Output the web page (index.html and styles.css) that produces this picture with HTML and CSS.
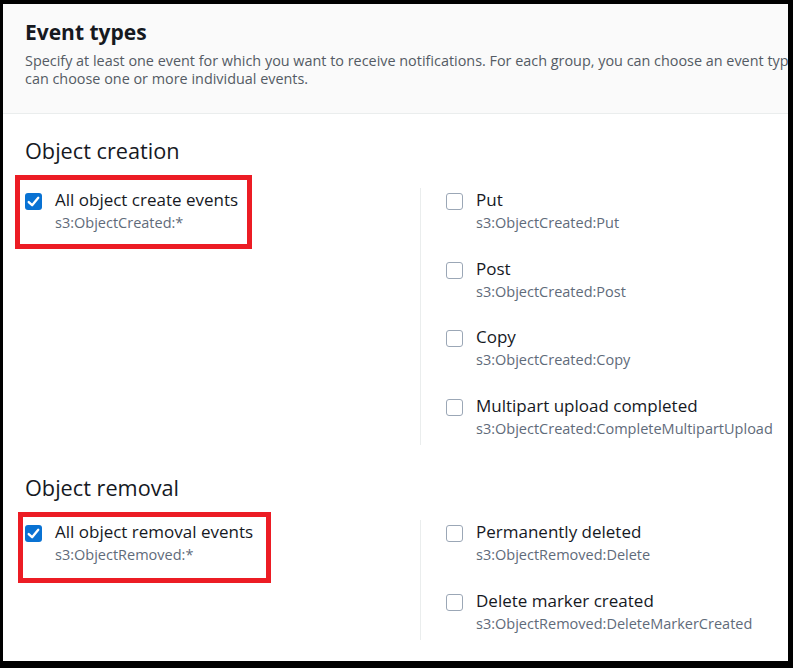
FILE: index.html
```html
<!DOCTYPE html>
<html lang="en">
<head>
    <meta charset="UTF-8">
    <meta name="viewport" content="width=device-width, initial-scale=1.0">
    <title>Event types</title>
    <link rel="stylesheet" href="styles.css">
</head>
<body>
    <div class="frame">
        <div class="panel-header">
            <h2>Event types</h2>
            <p class="panel-desc">Specify at least one event for which you want to receive notifications. For each group, you can choose an event type for all events, or you<br>can choose one or more individual events.</p>
        </div>

        <div class="panel-body">
            <div class="group">
                <h3 class="group-title">Object creation</h3>
                <div class="group-grid">
                    <div class="col-all">
                        <label class="item">
                            <span class="box checked">
                                <svg viewBox="0 0 16 16"><polyline points="3.5,8.5 6.7,11.5 12.5,4.5"/></svg>
                            </span>
                            <span class="item-text">
                                <span class="item-label">All object create events</span>
                                <span class="item-desc">s3:ObjectCreated:*</span>
                            </span>
                            <span class="annot annot-create"></span>
                        </label>
                    </div>
                    <div class="col-list">
                        <label class="item">
                            <span class="box"></span>
                            <span class="item-text">
                                <span class="item-label">Put</span>
                                <span class="item-desc">s3:ObjectCreated:Put</span>
                            </span>
                        </label>
                        <label class="item">
                            <span class="box"></span>
                            <span class="item-text">
                                <span class="item-label">Post</span>
                                <span class="item-desc">s3:ObjectCreated:Post</span>
                            </span>
                        </label>
                        <label class="item">
                            <span class="box"></span>
                            <span class="item-text">
                                <span class="item-label">Copy</span>
                                <span class="item-desc">s3:ObjectCreated:Copy</span>
                            </span>
                        </label>
                        <label class="item">
                            <span class="box"></span>
                            <span class="item-text">
                                <span class="item-label">Multipart upload completed</span>
                                <span class="item-desc">s3:ObjectCreated:CompleteMultipartUpload</span>
                            </span>
                        </label>
                    </div>
                </div>
            </div>

            <div class="group group-second">
                <h3 class="group-title">Object removal</h3>
                <div class="group-grid">
                    <div class="col-all">
                        <label class="item">
                            <span class="box checked">
                                <svg viewBox="0 0 16 16"><polyline points="3.5,8.5 6.7,11.5 12.5,4.5"/></svg>
                            </span>
                            <span class="item-text">
                                <span class="item-label">All object removal events</span>
                                <span class="item-desc">s3:ObjectRemoved:*</span>
                            </span>
                            <span class="annot annot-removal"></span>
                        </label>
                    </div>
                    <div class="col-list">
                        <label class="item">
                            <span class="box"></span>
                            <span class="item-text">
                                <span class="item-label">Permanently deleted</span>
                                <span class="item-desc">s3:ObjectRemoved:Delete</span>
                            </span>
                        </label>
                        <label class="item">
                            <span class="box"></span>
                            <span class="item-text">
                                <span class="item-label">Delete marker created</span>
                                <span class="item-desc">s3:ObjectRemoved:DeleteMarkerCreated</span>
                            </span>
                        </label>
                    </div>
                </div>
            </div>
        </div>
    </div>
</body>
</html>
```

FILE: styles.css
```css
body {
    margin: 0;
    font-family: "Open Sans", "Noto Sans", sans-serif;
    color: #16191f;
    background: #fff;
}
.frame {
    height: 668px;
    box-sizing: border-box;
    border-style: solid;
    border-color: #000;
    border-width: 4px 5px 7px 3px;
    overflow: hidden;
    background: #fff;
}

/* header */
.panel-header {
    background: #fafafa;
    border-bottom: 1px solid #eaeded;
    padding: 14px 0 25px 22px;
    white-space: nowrap;
}
.panel-header h2 {
    margin: 0;
    font-size: 21px;
    line-height: 28px;
    font-weight: 700;
    color: #16191f;
}
.panel-desc {
    margin: 6px 0 0;
    font-size: 14.4px;
    line-height: 18px;
    color: #545b64;
}

/* body */
.panel-body {
    padding: 23px 0 0 22px;
}
.group {
    margin-bottom: 29px;
}
.group-title {
    margin: 0 0 23px;
    font-size: 21.7px;
    line-height: 28px;
    font-weight: 400;
    color: #16191f;
}
.group-second .group-title {
    margin-bottom: 18px;
}
.group-grid {
    display: grid;
    grid-template-columns: 395px 1fr;
}
.col-list {
    border-left: 1px solid #eaeded;
    padding: 0 0 5px 25px;
    display: flex;
    flex-direction: column;
    gap: 22.7px;
}

/* checkbox items */
.item {
    position: relative;
    display: inline-flex;
    align-items: flex-start;
    gap: 13px;
    cursor: pointer;
}
.box {
    flex: none;
    width: 17px;
    height: 17px;
    margin-top: 5px;
    box-sizing: border-box;
    border: 1.5px solid #9ba7b6;
    border-radius: 3px;
    background: #fff;
}
.box.checked {
    border: none;
    background: #0972d3;
}
.box svg {
    display: block;
    width: 17px;
    height: 17px;
    fill: none;
    stroke: #fff;
    stroke-width: 2.2;
    stroke-linecap: round;
    stroke-linejoin: round;
}
.item-text {
    display: flex;
    flex-direction: column;
}
.item-label {
    font-size: 17px;
    line-height: 24px;
    color: #16191f;
}
.item-desc {
    font-size: 14.5px;
    line-height: 22px;
    color: #5f6b7a;
}

/* red highlight boxes drawn over the screenshot */
.annot {
    position: absolute;
    border: 5px solid #ec1c24;
    pointer-events: none;
}
.annot-create {
    left: -10px;
    top: -13px;
    right: -14px;
    bottom: -15px;
}
.annot-removal {
    left: -7px;
    top: -8px;
    right: -18px;
    bottom: -17px;
}
```
